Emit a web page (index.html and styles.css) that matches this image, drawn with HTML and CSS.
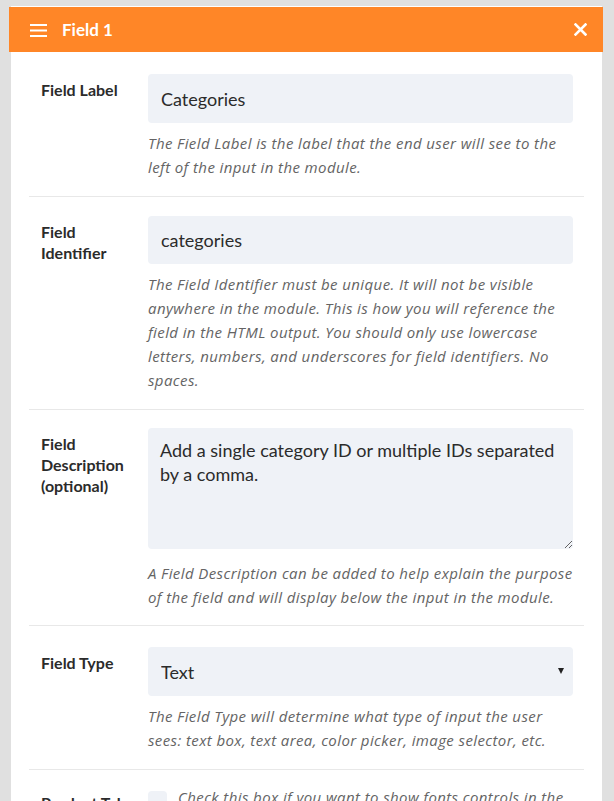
FILE: index.html
```html
<!DOCTYPE html>
<html>
<head>
  <title>Field 1</title>
  <link rel="stylesheet" href="styles.css">
</head>
<body>
  <div class="panel">
    <div class="panel-header">
      <svg class="menu-icon" width="17" height="13" viewBox="0 0 17 13">
        <path d="M0 1h17M0 6.5h17M0 12h17" stroke="#fff" stroke-width="2"/>
      </svg>
      <span class="panel-title">Field 1</span>
      <svg class="close-icon" width="13" height="13" viewBox="0 0 13 13">
        <path d="M1.5 1.5l10 10M11.5 1.5l-10 10" stroke="#fff" stroke-width="2.6" stroke-linecap="square"/>
      </svg>
    </div>

    <div class="panel-body">
      <div class="row">
        <label class="row-label" for="fieldLabel">Field Label</label>
        <div class="row-field">
          <input type="text" id="fieldLabel" class="text-input" value="Categories">
          <p class="help">The Field Label is the label that the end user will see to the left of the input in the module.</p>
        </div>
      </div>

      <div class="row">
        <label class="row-label" for="fieldId">Field Identifier</label>
        <div class="row-field">
          <input type="text" id="fieldId" class="text-input" value="categories">
          <p class="help">The Field Identifier must be unique. It will not be visible anywhere in the module. This is how you will reference the field in the HTML output. You should only use lowercase letters, numbers, and underscores for field identifiers. No spaces.</p>
        </div>
      </div>

      <div class="row">
        <label class="row-label" for="fieldDesc">Field Description (optional)</label>
        <div class="row-field">
          <textarea id="fieldDesc" class="text-area">Add a single category ID or multiple IDs separated by a comma.</textarea>
          <p class="help">A Field Description can be added to help explain the purpose of the field and will display below the input in the module.</p>
        </div>
      </div>

      <div class="row">
        <label class="row-label" for="fieldType">Field Type</label>
        <div class="row-field">
          <div class="select-wrap">
            <select id="fieldType" class="select-input">
              <option>Text</option>
              <option>Text Area</option>
              <option>Color Picker</option>
              <option>Image Selector</option>
            </select>
          </div>
          <p class="help">The Field Type will determine what type of input the user sees: text box, text area, color picker, image selector, etc.</p>
        </div>
      </div>

      <div class="row">
        <label class="row-label" for="fontControls">Product Tab Fonts</label>
        <div class="row-field check-field">
          <input type="checkbox" id="fontControls" class="check-input">
          <p class="help">Check this box if you want to show fonts controls in the module settings.</p>
        </div>
      </div>
    </div>
  </div>
</body>
</html>
```

FILE: styles.css
```css
body {
  margin: 0;
  background-color: #e0e0e0;
  font-family: Lato, "Noto Sans", sans-serif;
  color: #2b2b2b;
}

.panel {
  margin: 6px 12px 0 11px;
  background-color: white;
  border-top: 1px solid white;
  min-height: 794px;
}

.panel-header {
  display: flex;
  align-items: center;
  height: 45px;
  margin: 0 -1px 0 -2px;
  padding: 0 16px 0 21px;
  background-color: #ff8627;
  color: white;
}

.menu-icon {
  margin-top: 1px;
}

.panel-title {
  margin-left: 15px;
  font-size: 17px;
  font-weight: bold;
}

.close-icon {
  margin-left: auto;
}

.panel-body {
  padding: 0 18px 0 18px;
}

.row {
  display: flex;
  padding: 20px 11px 17px 12px;
  border-bottom: 1px solid #e8e8e8;
}

.row:nth-child(1) {
  padding-top: 22px;
}

.row:nth-child(2) {
  padding-top: 19px;
}

.row:nth-child(3) {
  padding-top: 18px;
  padding-bottom: 16px;
}

.row:nth-child(4) {
  padding-top: 21px;
}

.row-label {
  flex: 0 0 88px;
  margin-right: 19px;
  padding-top: 5px;
  font-size: 16px;
  font-weight: bold;
  line-height: 21px;
  color: #2b2b2b;
}

.row:nth-child(5) .row-label {
  padding-top: 2px;
}

.row-field {
  flex: 1;
  min-width: 0;
}

.text-input,
.select-input,
.text-area {
  display: block;
  width: 100%;
  box-sizing: border-box;
  border: none;
  border-radius: 4px;
  background-color: #eff2f7;
  font-family: inherit;
  font-size: 18px;
  color: #2b2b2b;
  outline: none;
}

.text-input {
  height: 48px;
  padding: 0 13px;
}

.row:first-child .text-input {
  height: 49px;
}

.text-area {
  height: 121px;
  margin-bottom: 12px;
  padding: 10px 12px;
  line-height: 24px;
  resize: vertical;
}

.select-wrap {
  position: relative;
}

.select-input {
  height: 49px;
  padding: 0 13px;
  appearance: none;
  -webkit-appearance: none;
}

.select-wrap::after {
  content: "";
  position: absolute;
  right: 9px;
  top: 21px;
  border-left: 3.5px solid transparent;
  border-right: 3.5px solid transparent;
  border-top: 6px solid #222;
}

.help {
  margin: 8px 0 0;
  font-family: "Open Sans", sans-serif;
  font-size: 15px;
  font-style: italic;
  letter-spacing: 0.4px;
  line-height: 24px;
  color: #646464;
}

.check-field {
  display: flex;
  align-items: flex-start;
}

.check-input {
  flex: 0 0 19px;
  height: 19px;
  margin: 1px 11px 0 0;
  border-radius: 4px;
  background-color: #eff2f7;
  appearance: none;
  -webkit-appearance: none;
}

.check-field .help {
  margin-top: -5px;
}
```
